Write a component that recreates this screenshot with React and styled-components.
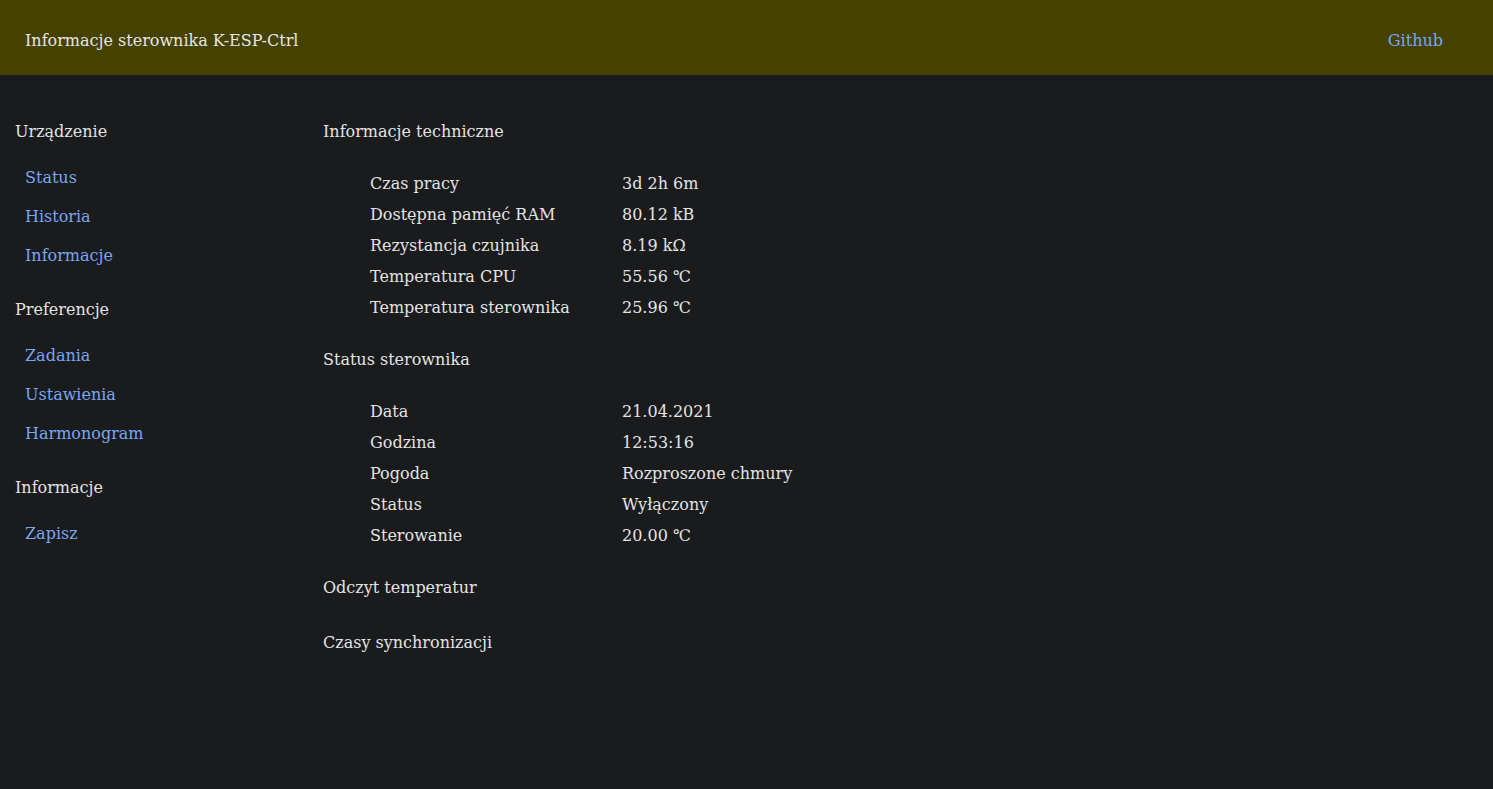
import styled, { createGlobalStyle } from 'styled-components';

const GlobalStyle = createGlobalStyle`
    html, body {
        margin: 0;
        padding: 0;
        background-color: #1a1b1d;
    }

    body {
        font-family: "DejaVu Serif", "Liberation Serif", serif;
        font-size: 16px;
        color: #e3e3e3;
    }
`

const menu = [
    { title: "Urządzenie", links: ["Status", "Historia", "Informacje"] },
    { title: "Preferencje", links: ["Zadania", "Ustawienia", "Harmonogram"] },
    { title: "Informacje", links: ["Zapisz"] },
];

const sections = [
    {
        title: "Informacje techniczne",
        rows: [
            ["Czas pracy", "3d 2h 6m"],
            ["Dostępna pamięć RAM", "80.12 kB"],
            ["Rezystancja czujnika", "8.19 kΩ"],
            ["Temperatura CPU", "55.56 ℃"],
            ["Temperatura sterownika", "25.96 ℃"],
        ],
    },
    {
        title: "Status sterownika",
        rows: [
            ["Data", "21.04.2021"],
            ["Godzina", "12:53:16"],
            ["Pogoda", "Rozproszone chmury"],
            ["Status", "Wyłączony"],
            ["Sterowanie", "20.00 ℃"],
        ],
    },
    { title: "Odczyt temperatur", rows: [] },
    { title: "Czasy synchronizacji", rows: [] },
];

function App() {
    return (
        <>
            <GlobalStyle />
            <Header>
                <Title>Informacje sterownika K-ESP-Ctrl</Title>
                <Link href="#">Github</Link>
            </Header>
            <Layout>
                <Sidebar>
                    {menu.map(group => (
                        <Group key={group.title}>
                            <GroupTitle>{group.title}</GroupTitle>
                            <LinkList>
                                {group.links.map(link => (
                                    <MenuLink key={link} href="#">{link}</MenuLink>
                                ))}
                            </LinkList>
                        </Group>
                    ))}
                </Sidebar>
                <Main>
                    {sections.map(section => (
                        <Section key={section.title} $empty={section.rows.length === 0}>
                            <SectionTitle>{section.title}</SectionTitle>
                            {section.rows.length > 0 && (
                                <Table>
                                    {section.rows.map(([label, value]) => (
                                        <Row key={label}>
                                            <Label>{label}</Label>
                                            <Value>{value}</Value>
                                        </Row>
                                    ))}
                                </Table>
                            )}
                        </Section>
                    ))}
                </Main>
            </Layout>
        </>
    );
}

export default App;

const Header = styled.header`
    display: flex;
    align-items: center;
    justify-content: space-between;
    height: 75px;
    padding: 0 50px 0 25px;
    box-sizing: border-box;
    background-color: #454100;
`

const Title = styled.span`
    line-height: 20px;
    margin-top: 7px;
    color: #e6e6e6;
`

const Link = styled.a`
    line-height: 20px;
    margin-top: 6px;
    color: #79a6ef;
    text-decoration: none;
`

const Layout = styled.div`
    display: flex;
    align-items: flex-start;
    padding-top: 47px;
`

const Sidebar = styled.nav`
    display: flex;
    flex-direction: column;
    gap: 34.5px;
    width: 323px;
    padding-left: 15px;
    box-sizing: border-box;
`

const Group = styled.div`
    display: flex;
    flex-direction: column;
    gap: 25.7px;
`

const GroupTitle = styled.div`
    line-height: 20px;
`

const LinkList = styled.div`
    display: flex;
    flex-direction: column;
    gap: 19px;
    padding-left: 10px;
`

const MenuLink = styled.a`
    line-height: 20px;
    color: #79a6ef;
    text-decoration: none;
`

const Main = styled.main`
    display: flex;
    flex-direction: column;
    gap: 32px;
`

const Section = styled.section`
    display: flex;
    flex-direction: column;
    gap: 32px;
    margin-bottom: ${props => props.$empty ? "3px" : "0"};
`

const SectionTitle = styled.div`
    line-height: 20px;
`

const Table = styled.div`
    display: flex;
    flex-direction: column;
    gap: 11px;
    padding-left: 47px;
`

const Row = styled.div`
    display: grid;
    grid-template-columns: 252px auto;
    line-height: 20px;
`

const Label = styled.span``

const Value = styled.span``
